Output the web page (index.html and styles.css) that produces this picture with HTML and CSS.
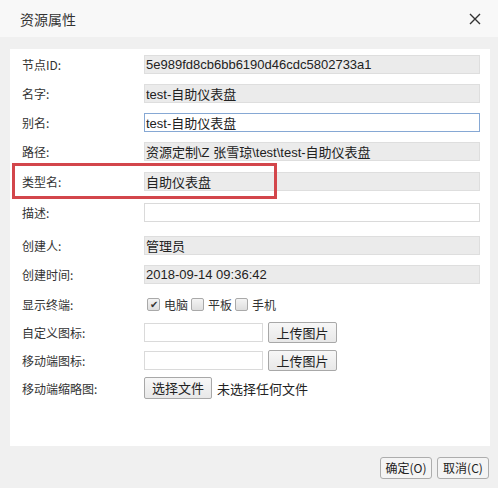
FILE: index.html
```html
<!DOCTYPE html>
<html lang="zh-CN">
<head>
    <meta charset="UTF-8" />
    <meta name="viewport" content="width=device-width, initial-scale=1.0" />
    <title>资源属性</title>
    <link rel="stylesheet" href="styles.css">
</head>
<body>
<div class="dialog">
    <header class="dialog-head">
        <h1>资源属性</h1>
        <button class="close" title="关闭">
            <svg width="12" height="12" viewBox="0 0 12 12"><path d="M1 1L11 11M11 1L1 11" stroke="#333" stroke-width="1.4" fill="none"/></svg>
        </button>
    </header>
    <div class="dialog-body">
        <div class="panel">
            <div class="row">
                <label>节点ID:</label>
                <input class="field readonly" type="text" value="5e989fd8cb6bb6190d46cdc5802733a1" readonly>
            </div>
            <div class="row">
                <label>名字:</label>
                <input class="field readonly" type="text" value="test-自助仪表盘" readonly>
            </div>
            <div class="row">
                <label>别名:</label>
                <input class="field focus" type="text" value="test-自助仪表盘">
            </div>
            <div class="row">
                <label>路径:</label>
                <input class="field readonly" type="text" value="资源定制\Z 张雪琼\test\test-自助仪表盘" readonly>
            </div>
            <div class="row row-type">
                <span class="mark"></span>
                <label>类型名:</label>
                <input class="field readonly" type="text" value="自助仪表盘" readonly>
            </div>
            <div class="row row-desc">
                <label>描述:</label>
                <input class="field" type="text" value="">
            </div>
            <div class="row row-creator">
                <label>创建人:</label>
                <input class="field readonly" type="text" value="管理员" readonly>
            </div>
            <div class="row">
                <label>创建时间:</label>
                <input class="field readonly" type="text" value="2018-09-14 09:36:42" readonly>
            </div>
            <div class="row row-check">
                <label>显示终端:</label>
                <div class="checks">
                    <span class="box checked">✔</span><span class="check-text">电脑</span>
                    <span class="box"></span><span class="check-text">平板</span>
                    <span class="box"></span><span class="check-text">手机</span>
                </div>
            </div>
            <div class="row row-upload">
                <label>自定义图标:</label>
                <input class="field small" type="text" value="">
                <button class="btn">上传图片</button>
            </div>
            <div class="row row-upload2">
                <label>移动端图标:</label>
                <input class="field small" type="text" value="">
                <button class="btn">上传图片</button>
            </div>
            <div class="row row-file">
                <label>移动端缩略图:</label>
                <button class="btn file-btn">选择文件</button>
                <span class="file-text">未选择任何文件</span>
            </div>
        </div>
        <div class="dialog-foot">
            <button class="btn foot-btn">确定(O)</button>
            <button class="btn foot-btn">取消(C)</button>
        </div>
    </div>
</div>
</body>
</html>
```

FILE: styles.css
```css
body {
  margin: 0;
  font-family: "Liberation Sans", "Noto Sans CJK SC", sans-serif;
  color: #333;
  background-color: #f0f0f0;
}

.dialog {
  width: 498px;
  height: 488px;
  overflow: hidden;
}

.dialog-head {
  height: 37px;
  background-color: #f8f8f8;
  display: flex;
  align-items: center;
  justify-content: space-between;
  padding: 0 17px 0 20px;
}

.dialog-head h1 {
  margin: 0;
  font-size: 14px;
  font-weight: normal;
  font-family: "Noto Sans CJK SC", sans-serif;
  color: #333;
}

.close {
  border: none;
  background: none;
  padding: 0;
  width: 12px;
  height: 12px;
  display: flex;
}

.dialog-body {
  background-color: #f0f0f0;
  padding: 12px 8px 0 10px;
}

.panel {
  background-color: white;
  height: 397px;
  box-sizing: border-box;
  padding: 6px 10px 0 12px;
}

.row {
  display: flex;
  align-items: center;
  margin-bottom: 10px;
  position: relative;
}

.row label {
  width: 122px;
  flex-shrink: 0;
  font-size: 12px;
  font-family: "Noto Sans CJK SC", sans-serif;
  color: #333;
}

.field {
  width: 336px;
  height: 19px;
  box-sizing: border-box;
  border: 1px solid #dadada;
  background-color: white;
  padding: 0 1px;
  margin: 0;
  font-size: 13px;
  font-family: "Liberation Sans", "Noto Sans CJK SC", sans-serif;
  color: #222;
  outline: none;
}

.field.readonly {
  background-color: #ebebeb;
  border-color: #dedede;
}

.field.focus {
  border-color: #86a8d4;
}

.field.small {
  width: 119px;
}

.row-type {
  margin-top: 11px;
  margin-bottom: 12px;
}

.mark {
  position: absolute;
  left: -10px;
  top: -9px;
  width: 265px;
  height: 36px;
  box-sizing: border-box;
  border: 3px solid #d3464b;
}

.row-desc {
  margin-bottom: 14px;
}

.row-check {
  height: 16px;
  margin-top: 12px;
  margin-bottom: 10px;
}

.checks {
  display: flex;
  align-items: center;
  padding-left: 3px;
}

.box {
  width: 11px;
  height: 11px;
  border: 1px solid #a9a9a9;
  border-radius: 2px;
  background: linear-gradient(#f4f4f4, #dedede);
  font-size: 10px;
  line-height: 11px;
  text-align: center;
  color: #333;
}

.check-text {
  font-size: 12px;
  font-family: "Noto Sans CJK SC", sans-serif;
  margin: 0 3px 0 4px;
}

.btn {
  font-size: 13px;
  font-family: "Noto Sans CJK SC", sans-serif;
  color: #222;
  background: linear-gradient(#f7f7f7, #e8e8e8);
  border: 1px solid #a8a8a8;
  border-radius: 2px;
  padding: 0;
  margin: 0;
  box-sizing: border-box;
}

.row-upload .btn,
.row-upload2 .btn {
  width: 69px;
  height: 21px;
  margin-left: 5px;
  line-height: 19px;
}

.row-upload2 {
  margin-top: -3px;
  margin-bottom: 6px;
}

.file-btn {
  width: 68px;
  height: 22px;
  line-height: 20px;
}

.file-text {
  font-size: 13px;
  font-family: "Noto Sans CJK SC", sans-serif;
  color: #222;
  margin-left: 5px;
}

.dialog-foot {
  display: flex;
  justify-content: flex-end;
  gap: 5px;
  padding: 11px 1px 0 0;
}

.foot-btn {
  width: 52px;
  height: 22px;
  font-size: 12px;
  line-height: 20px;
  background: #f4f4f4;
  border-color: #adadad;
  border-radius: 3px;
}
```
